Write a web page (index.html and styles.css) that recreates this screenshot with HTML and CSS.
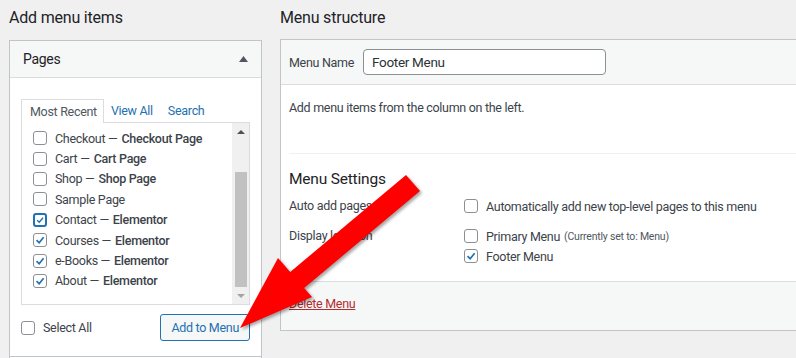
FILE: index.html
```html
<!DOCTYPE html>
<html lang="en">
<head>
    <meta charset="UTF-8">
    <title>Menus</title>
    <link rel="stylesheet" href="styles.css">
</head>
<body>
    <div class="page">
        <div class="col-left">
            <h2 class="col-title">Add menu items</h2>
            <div class="panel">
                <div class="panel-head">
                    <span>Pages</span>
                    <svg class="toggle" width="9" height="6" viewBox="0 0 9 6"><polygon points="0,6 4.5,0 9,6" fill="#50575e"/></svg>
                </div>
                <div class="panel-body">
                    <ul class="tabs">
                        <li class="tab active">Most Recent</li>
                        <li class="tab"><a href="#">View All</a></li>
                        <li class="tab"><a href="#">Search</a></li>
                    </ul>
                    <div class="list-box">
                        <ul class="page-list">
                            <li><span class="cb"></span>Checkout — <b>Checkout Page</b></li>
                            <li><span class="cb"></span>Cart — <b>Cart Page</b></li>
                            <li><span class="cb"></span>Shop — <b>Shop Page</b></li>
                            <li><span class="cb"></span>Sample Page</li>
                            <li><span class="cb checked focus"><svg viewBox="0 0 14 14"><path d="M3 7.2 L6 10.2 L11.2 3.8" fill="none" stroke="#2271b1" stroke-width="2"/></svg></span>Contact — <b>Elementor</b></li>
                            <li><span class="cb checked"><svg viewBox="0 0 14 14"><path d="M3 7.2 L6 10.2 L11.2 3.8" fill="none" stroke="#2271b1" stroke-width="2"/></svg></span>Courses — <b>Elementor</b></li>
                            <li><span class="cb checked"><svg viewBox="0 0 14 14"><path d="M3 7.2 L6 10.2 L11.2 3.8" fill="none" stroke="#2271b1" stroke-width="2"/></svg></span>e-Books — <b>Elementor</b></li>
                            <li><span class="cb checked"><svg viewBox="0 0 14 14"><path d="M3 7.2 L6 10.2 L11.2 3.8" fill="none" stroke="#2271b1" stroke-width="2"/></svg></span>About — <b>Elementor</b></li>
                        </ul>
                        <div class="scrollbar">
                            <span class="sb-btn"><svg width="8" height="4" viewBox="0 0 8 4"><polygon points="0,4 4,0 8,4" fill="#505050"/></svg></span>
                            <span class="sb-track"><span class="sb-thumb"></span></span>
                            <span class="sb-btn"><svg width="8" height="4" viewBox="0 0 8 4"><polygon points="0,0 4,4 8,0" fill="#a3a3a3"/></svg></span>
                        </div>
                    </div>
                    <div class="panel-actions">
                        <label class="select-all"><span class="cb"></span>Select All</label>
                        <button class="btn" type="button">Add to Menu</button>
                    </div>
                </div>
            </div>
            <div class="panel panel-next"></div>
        </div>

        <div class="col-right">
            <h2 class="col-title">Menu structure</h2>
            <div class="menu-box">
                <div class="menu-head">
                    <label class="name-label" for="menu-name">Menu Name</label>
                    <input class="name-input" id="menu-name" type="text" value="Footer Menu">
                </div>
                <div class="menu-body">
                    <p class="hint">Add menu items from the column on the left.</p>
                    <div class="menu-settings">
                        <h3 class="settings-title">Menu Settings</h3>
                        <div class="settings-grid">
                            <div class="set-label">Auto add pages</div>
                            <div class="set-options">
                                <div class="opt"><span class="cb"></span>Automatically add new top-level pages to this menu</div>
                            </div>
                            <div class="set-label">Display location</div>
                            <div class="set-options">
                                <div class="opt"><span class="cb"></span>Primary Menu <small>(Currently set to: Menu)</small></div>
                                <div class="opt"><span class="cb checked"><svg viewBox="0 0 14 14"><path d="M3 7.2 L6 10.2 L11.2 3.8" fill="none" stroke="#2271b1" stroke-width="2"/></svg></span>Footer Menu</div>
                            </div>
                        </div>
                    </div>
                </div>
                <div class="menu-foot">
                    <a href="#" class="delete-link">Delete Menu</a>
                </div>
            </div>
        </div>
    </div>

    <svg class="pointer" width="796" height="358" viewBox="0 0 796 358">
        <g fill="#ff0000">
            <polygon points="406,175 420,191 303,289 289,273"/>
            <polygon points="240,328 278,258 312,297"/>
        </g>
    </svg>
</body>
</html>
```

FILE: styles.css
```css
body {
    margin: 0;
    background-color: #f0f0f1;
    font-family: Roboto, "Open Sans", sans-serif;
    font-size: 12.5px;
    letter-spacing: -0.3px;
    color: #3c434a;
    overflow: hidden;
    position: relative;
    height: 358px;
}
.page {
    display: flex;
    gap: 18px;
    padding-left: 9px;
}
.col-left {
    width: 253px;
    flex-shrink: 0;
}
.col-right {
    width: 560px;
    flex-shrink: 0;
}
.col-title {
    margin: 8px 0 12px 0;
    font-size: 16px;
    line-height: 20px;
    font-weight: 400;
    letter-spacing: -0.2px;
    color: #1d2327;
}
.col-right .col-title {
    margin-bottom: 11px;
}

/* left accordion */
.panel {
    border: 1px solid #c3c4c7;
    background-color: #fff;
}
.panel-head {
    height: 36px;
    display: flex;
    align-items: center;
    justify-content: space-between;
    padding: 0 13px 0 13px;
    background-color: #f6f7f7;
    border-bottom: 1px solid #dcdcde;
    font-size: 14px;
    color: #1d2327;
}
.panel-body {
    padding: 21px 11px 15px 11px;
}
.panel-next {
    border-top: none;
    height: 20px;
}
.tabs {
    list-style: none;
    margin: 0;
    padding: 0;
    display: flex;
}
.tab {
    height: 22px;
    line-height: 23px;
    padding: 0 8px 0 7px;
}
.tab a {
    color: #2271b1;
    text-decoration: none;
}
.tab.active {
    border: 1px solid #dcdcde;
    border-bottom: none;
    padding: 0 6px 0 8px;
    background-color: #fff;
    color: #50575e;
    position: relative;
    margin-bottom: -1px;
    height: 23px;
}
.list-box {
    display: flex;
    height: 181px;
    border: 1px solid #dcdcde;
    overflow: hidden;
}
.page-list {
    flex: 1;
    list-style: none;
    margin: 0;
    padding: 5px 0 0 11px;
}
.page-list li {
    height: 20.4px;
    display: flex;
    align-items: center;
    white-space: nowrap;
}
.page-list b {
    font-weight: 500;
    margin-left: 4px;
}
.cb {
    width: 12px;
    height: 12px;
    border: 1px solid #8c8f94;
    border-radius: 3px;
    background-color: #fff;
    margin-right: 8px;
    flex-shrink: 0;
    display: inline-flex;
}
.cb svg {
    width: 12px;
    height: 12px;
}
.cb.focus {
    border: 2px solid #2271b1;
    width: 10px;
    height: 10px;
}
.cb.focus svg {
    width: 10px;
    height: 10px;
}
.scrollbar {
    width: 17px;
    background-color: #f0f0f0;
    display: flex;
    flex-direction: column;
}
.sb-btn {
    height: 17px;
    display: flex;
    align-items: center;
    justify-content: center;
}
.sb-track {
    flex: 1;
    display: flex;
    flex-direction: column;
    justify-content: flex-end;
    align-items: center;
}
.sb-thumb {
    width: 12px;
    height: 115px;
    background-color: #c1c1c1;
}
.panel-actions {
    display: flex;
    justify-content: space-between;
    align-items: center;
    margin-top: 9px;
}
.select-all {
    display: flex;
    align-items: center;
    color: #3c434a;
}
.btn {
    height: 27px;
    padding: 0 10px;
    font-family: inherit;
    font-size: 12.5px;
    letter-spacing: -0.3px;
    color: #2271b1;
    background-color: #f6f7f7;
    border: 1px solid #2271b1;
    border-radius: 3px;
}

/* right menu box */
.menu-box {
    border: 1px solid #c3c4c7;
    background-color: #fff;
}
.menu-head {
    display: flex;
    align-items: center;
    padding: 9px 8px;
    background-color: #f6f7f7;
    border-bottom: 1px solid #dcdcde;
}
.name-label {
    width: 74px;
    white-space: nowrap;
    color: #3c434a;
}
.name-input {
    width: 243px;
    height: 26px;
    box-sizing: border-box;
    padding: 0 8px;
    border: 1px solid #8c8f94;
    border-radius: 4px;
    font-family: inherit;
    font-size: 13.5px;
    letter-spacing: -0.3px;
    color: #2c3338;
}
.menu-body {
    padding: 13px 8px 15px 8px;
}
.hint {
    margin: 0;
    line-height: 20px;
}
.menu-settings {
    margin-top: 35px;
    border-top: 1px solid #f0f0f1;
    padding-top: 15px;
}
.settings-title {
    margin: 0 0 7px 0;
    font-size: 15.5px;
    line-height: 20px;
    font-weight: 400;
    letter-spacing: -0.2px;
    color: #1d2327;
}
.settings-grid {
    display: grid;
    grid-template-columns: 175px 1fr;
    row-gap: 10px;
}
.set-label {
    line-height: 20px;
}
.opt {
    height: 20px;
    display: flex;
    align-items: center;
    white-space: nowrap;
}
.opt small {
    font-size: 10.5px;
    letter-spacing: -0.2px;
    margin-left: 4px;
    color: #50575e;
}
.menu-foot {
    padding: 12px 8px 16px 8px;
    line-height: 20px;
    background-color: #f6f7f7;
    border-top: 1px solid #dcdcde;
}
.delete-link {
    color: #b32d2e;
    text-decoration: underline;
}

/* red annotation arrow */
.pointer {
    position: absolute;
    left: 0;
    top: 0;
    pointer-events: none;
    filter: drop-shadow(2px 2px 1.5px rgba(0, 0, 0, 0.35));
}
```
